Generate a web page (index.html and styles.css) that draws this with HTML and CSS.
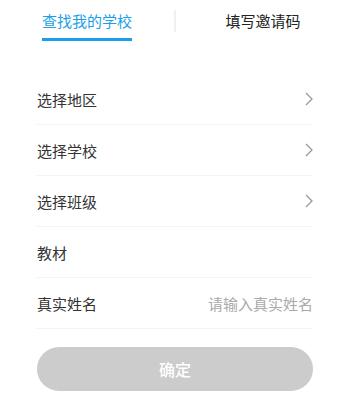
FILE: index.html
```html
<!DOCTYPE html>
<html lang="zh">
<head>
    <meta charset="UTF-8">
    <meta name="viewport" content="width=device-width, initial-scale=1.0">
    <title>查找我的学校</title>
    <link rel="stylesheet" href="styles.css">
</head>
<body>
    <div class="tabs">
        <div class="tab active"><span>查找我的学校</span></div>
        <div class="tab-divider"></div>
        <div class="tab"><span>填写邀请码</span></div>
    </div>

    <div class="form">
        <div class="row">
            <span class="label">选择地区</span>
            <svg class="chevron" viewBox="0 0 8 14"><path d="M1 1 L7 7 L1 13" /></svg>
        </div>
        <div class="row">
            <span class="label">选择学校</span>
            <svg class="chevron" viewBox="0 0 8 14"><path d="M1 1 L7 7 L1 13" /></svg>
        </div>
        <div class="row">
            <span class="label">选择班级</span>
            <svg class="chevron" viewBox="0 0 8 14"><path d="M1 1 L7 7 L1 13" /></svg>
        </div>
        <div class="row">
            <span class="label">教材</span>
        </div>
        <div class="row">
            <span class="label">真实姓名</span>
            <span class="placeholder">请输入真实姓名</span>
        </div>
    </div>

    <button class="submit">确定</button>
</body>
</html>
```

FILE: styles.css
```css
body {
    margin: 0;
    background-color: #fff;
    font-family: "Noto Sans CJK SC", "Noto Sans", sans-serif;
    color: #333;
}
.tabs {
    display: flex;
    align-items: flex-start;
    height: 42px;
}
.tab {
    flex: 1;
    display: flex;
    justify-content: center;
}
.tab span {
    font-size: 15px;
    line-height: 22px;
    padding-top: 10px;
    padding-bottom: 6px;
    border-bottom: 3px solid transparent;
    color: #222;
}
.tab.active span {
    color: #1a9fe8;
    border-bottom-color: #1a9fe8;
}
.tab-divider {
    width: 2px;
    height: 22px;
    margin-top: 10px;
    background-color: #f0f0f0;
}
.form {
    margin: 32px 37px 0 37px;
}
.row {
    display: flex;
    align-items: center;
    justify-content: space-between;
    height: 50px;
    border-bottom: 1px solid #f3f3f3;
}
.label {
    font-size: 15px;
    color: #333;
}
.placeholder {
    font-size: 15px;
    color: #aaa;
}
.chevron {
    width: 8px;
    height: 14px;
    fill: none;
    stroke: #999;
    stroke-width: 1.3;
}
.submit {
    display: block;
    width: 276px;
    height: 44px;
    margin: 18px auto 0 37px;
    border: none;
    border-radius: 22px;
    background-color: #cccccc;
    color: #fff;
    font-family: inherit;
    font-size: 16px;
    font-weight: 500;
}
```
